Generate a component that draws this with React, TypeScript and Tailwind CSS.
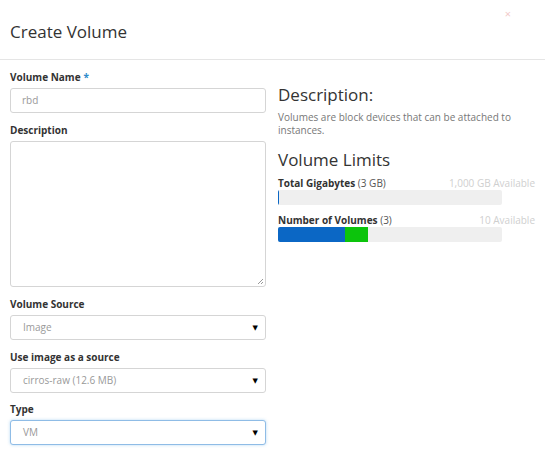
import React from "react";

const font = { fontFamily: '"Open Sans", "DejaVu Sans", sans-serif' };

function Label({ text, required }: { text: string; required?: boolean }) {
  return (
    <div className="h-3 leading-3 text-[10px] font-bold text-[#333] mb-[5px]">
      {text}
      {required && <span className="text-[#2e8bcb] ml-[3px]">*</span>}
    </div>
  );
}

function SelectBox({ value, focus }: { value: string; focus?: boolean }) {
  return (
    <div
      className={`h-[25px] rounded-[3px] border bg-white flex items-center justify-between pl-[12px] pr-[7px] ${
        focus ? "border-[#8fbce6] shadow-[0_0_3px_rgba(102,175,233,0.5)]" : "border-[#d5d5d5]"
      }`}
    >
      <span className="text-[10px] text-[#999]">{value}</span>
      <span className="text-[7px] text-black leading-none">▼</span>
    </div>
  );
}

function LimitBar({
  label,
  count,
  available,
  parts,
}: {
  label: string;
  count: string;
  available: string;
  parts: { color: string; width: string }[];
}) {
  return (
    <div>
      <div className="flex justify-between items-center text-[10px] h-[14px] leading-[14px]">
        <span className="text-[#333]">
          <span className="font-bold">{label}</span> <span className="text-[#555]">{count}</span>
        </span>
        <span className="text-[#cfcfcf]">{available}</span>
      </div>
      <div className="w-[224px] h-[15px] rounded-[2px] bg-[#efefef] flex overflow-hidden">
        {parts.map((p, i) => (
          <div key={i} className="h-full" style={{ background: p.color, width: p.width }} />
        ))}
      </div>
    </div>
  );
}

export default function App() {
  return (
    <div className="w-[545px] h-[455px] bg-white overflow-hidden" style={font}>
      {/* Header */}
      <div className="relative h-[60px] border-b border-[#e5e5e5] flex items-center px-[10px]">
        <h1 className="text-[17px] text-[#333] leading-none mt-[4px]">Create Volume</h1>
        <span className="absolute right-[34px] top-[6px] text-[11px] text-[#f2c9c9]">×</span>
      </div>

      {/* Body */}
      <div className="flex px-[10px] pt-[11px]">
        {/* Left form column */}
        <div className="w-[256px]">
          <Label text="Volume Name" required />
          <div className="h-[25px] rounded-[3px] border border-[#d5d5d5] flex items-center pl-[11px] text-[10px] text-[#999]">
            rbd
          </div>

          <div className="mt-[11px]">
            <Label text="Description" />
            <div className="relative h-[146px] rounded-[3px] border border-[#d5d5d5]">
              <svg className="absolute right-[1px] bottom-[1px]" width="7" height="7" viewBox="0 0 7 7">
                <path d="M1 6 L6 1 M4 6 L6 4" stroke="#999" strokeWidth="1" />
              </svg>
            </div>
          </div>

          <div className="mt-[11px]">
            <Label text="Volume Source" />
            <SelectBox value="Image" />
          </div>

          <div className="mt-[11px]">
            <Label text="Use image as a source" />
            <SelectBox value="cirros-raw (12.6 MB)" />
          </div>

          <div className="mt-[10px]">
            <Label text="Type" />
            <SelectBox value="VM" focus />
          </div>
        </div>

        {/* Right info column */}
        <div className="ml-[12px] flex-1">
          <h2 className="text-[17px] text-[#333] leading-[20px] mt-[14px]">Description:</h2>
          <p className="text-[10px] text-[#777] leading-[13px] mt-[6px] pr-[20px]">
            Volumes are block devices that can be attached to instances.
          </p>
          <h2 className="text-[17px] text-[#333] leading-[20px] mt-[13px]">Volume Limits</h2>
          <div className="mt-[6px]">
            <LimitBar
              label="Total Gigabytes"
              count="(3 GB)"
              available="1,000 GB Available"
              parts={[{ color: "#0b67c5", width: "1px" }]}
            />
          </div>
          <div className="mt-[8px]">
            <LimitBar
              label="Number of Volumes"
              count="(3)"
              available="10 Available"
              parts={[
                { color: "#0b67c5", width: "67px" },
                { color: "#0cc40c", width: "23px" },
              ]}
            />
          </div>
        </div>
      </div>
    </div>
  );
}
